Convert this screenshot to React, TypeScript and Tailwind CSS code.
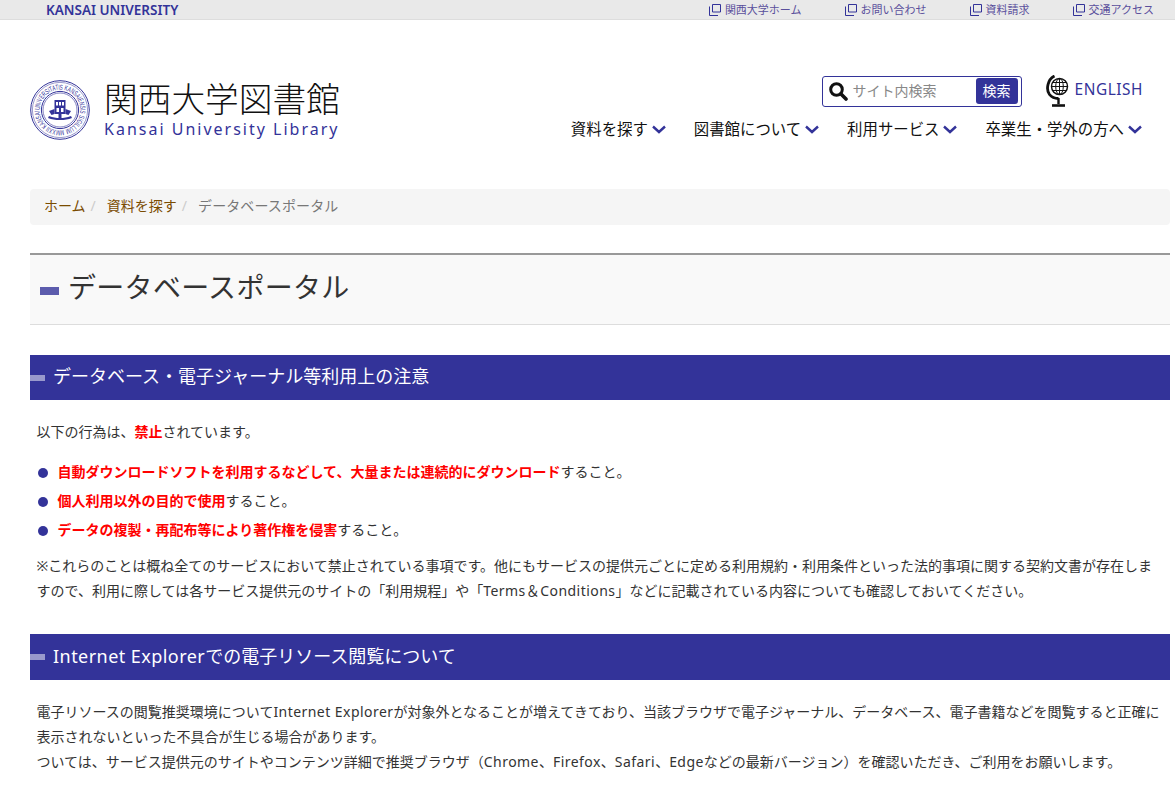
const jp = 'font-["Noto_Sans","Noto_Sans_CJK_JP",sans-serif]'

function TopLink({ label }: { label: string }) {
  return (
    <a className="flex items-center gap-[4px] text-[11px] leading-[12px] text-[#5a4f9c]">
      <svg width="12" height="12" viewBox="0 0 12 12" fill="none" stroke="#333399" strokeWidth="1">
        <path d="M3.500 .5h8v7.500h-8z" />
        <path d="M.5 2.500v9h8.500" />
      </svg>
      {label}
    </a>
  )
}

// 校章: 円形の文字は textPath の実テキスト
function Seal() {
  return (
    <svg width="60" height="60" viewBox="0 0 60 60" className="shrink-0">
      <defs>
        <path id="ring" d="M30 30m-20.300 0a20.300 20.300 0 1 1 40.600 0a20.300 20.300 0 1 1 -40.600 0" />
      </defs>
      <circle cx="30" cy="30" r="29.300" fill="none" stroke="#333399" strokeWidth="1" />
      <circle cx="30" cy="30" r="27.600" fill="none" stroke="#333399" strokeWidth=".5" />
      <circle cx="30" cy="30" r="18.600" fill="none" stroke="#333399" strokeWidth="1" />
      <circle cx="30" cy="30" r="17" fill="none" stroke="#333399" strokeWidth=".6" />
      <text fontSize="7.400" fill="#333399" fontFamily="Liberation Sans, sans-serif" textLength="126" lengthAdjust="spacingAndGlyphs">
        <textPath href="#ring">UNIVERSITATIS KANSAIENSIS SIGILLUM MMXXII KANSAI</textPath>
      </text>
      <path d="M24.500 20h11v14h-11z" fill="#333399" />
      <path d="M26 22h2v3.500h-2zM29 22h2v3.500h-2zM32 22h2v3.500h-2zM26.500 28h2.500v4h-2.500zM31 28h2.500v4h-2.500z" fill="#ffffff" />
      <path d="M19 31l5.500-2v5l-3 1zM41 31l-5.500-2v5l3 1z" fill="#333399" />
      <path d="M19 36c4 1.500 7 2 11 2s7-.5 11-2l1 2c-4 1.500-7 2-12 2s-8-.5-12-2z" fill="#333399" />
      <path d="M28.500 34h3v5h-3z" fill="#333399" />
    </svg>
  )
}

function Globe() {
  return (
    <svg width="24" height="32" viewBox="0 0 24 32" className="mr-[5px] ml-[24px] shrink-0" fill="none" stroke="#111">
      <circle cx="13.500" cy="11.500" r="8" strokeWidth="1.500" />
      <ellipse cx="13.500" cy="11.500" rx="3.800" ry="8" strokeWidth="1" />
      <path d="M5.500 11.500h16M6.500 7.500h14M6.500 15.500h14M13.500 3.500v16" strokeWidth="1" />
      <path d="M8.500 1C2 4-.5 14 3.500 19.500c2 2.500 5 4 9 4" strokeWidth="2.800" />
      <path d="M12.500 23v6" strokeWidth="2.400" />
      <path d="M6 30.500h13" strokeWidth="2.600" />
    </svg>
  )
}

function NavItem({ label }: { label: string }) {
  return (
    <a className="flex items-center gap-[4px] text-[15.400px] leading-[20px] text-[#111]">
      {label}
      <svg width="14" height="9" viewBox="0 0 14 9" fill="none" stroke="#333399" strokeWidth="2.400" className="mt-[-1px]">
        <path d="M1 1.500l6 5.500 6-5.500" />
      </svg>
    </a>
  )
}

function SectionHead({ children, className }: { children: React.ReactNode; className: string }) {
  return (
    <h2 className={`flex items-center bg-[#333399] text-[18px] font-normal text-white ${className}`}>
      <span className="mr-[8px] h-[6px] w-[15px] bg-[#9999cc]" />
      <span className="mt-[-2px]">{children}</span>
    </h2>
  )
}

function Bullet({ children }: { children: React.ReactNode }) {
  return (
    <li className="flex h-[29px] items-center">
      <span className="mt-[3px] mr-[10px] ml-[1px] h-[10px] w-[10px] rounded-full bg-[#333399]" />
      <span>{children}</span>
    </li>
  )
}

const Red = ({ children }: { children: React.ReactNode }) => (
  <strong className="font-bold text-[#ff0000]">{children}</strong>
)

// 欧文はメイリオに合わせて少し広げる
const Lat = ({ children }: { children: React.ReactNode }) => <span className="tracking-[0.45px]">{children}</span>

export default function App() {
  return (
    <div className={`${jp} h-[790px] w-[1175px] overflow-hidden bg-white text-[14px] text-[#333]`}>
      <div className="flex h-[20px] items-center justify-between border-b border-[#dddddd] bg-[#e9e9e9] pr-[21px] pl-[46px]">
        <span className="text-[13.500px] leading-[14px] font-semibold text-[#333399]">KANSAI UNIVERSITY</span>
        <div className="flex gap-[43px]">
          <TopLink label="関西大学ホーム" />
          <TopLink label="お問い合わせ" />
          <TopLink label="資料請求" />
          <TopLink label="交通アクセス" />
        </div>
      </div>

      <header className="flex justify-between pt-[55px] pr-[32px] pl-[30px]">
        <div className="mt-[5px] flex items-center gap-[14px]">
          <Seal />
          <div className="mt-[-2px]">
            <div className="text-[33.700px] leading-[38px] font-light text-[#111]">関西大学図書館</div>
            <div className="mt-[1px] text-[16px] leading-[20px] tracking-[2px] text-[#333399]">Kansai University Library</div>
          </div>
        </div>
        <div className="flex flex-col items-end">
          <div className="flex items-center">
            <div className="flex h-[31px] w-[200px] items-center rounded-[3px] border border-[#333399] pr-[3px] pl-[5px]">
              <svg width="20" height="20" viewBox="0 0 20 20" fill="none" stroke="#111" className="shrink-0">
                <circle cx="8.500" cy="8.500" r="5.800" strokeWidth="3" />
                <path d="M13 13l5 5" strokeWidth="3.600" strokeLinecap="round" />
              </svg>
              <span className="mb-[2px] ml-[5px] flex-1 text-[14px] text-[#888]">サイト内検索</span>
              <span className="flex h-[26px] w-[42px] items-center justify-center rounded-[3px] bg-[#333399] pb-[2px] text-[14px] text-white">検索</span>
            </div>
            <Globe />
            <span className="mb-[3px] text-[15.400px] tracking-[0.55px] text-[#333399]">ENGLISH</span>
          </div>
          <nav className="mt-[13px] mr-[1px] flex gap-[28px]">
            <NavItem label="資料を探す" />
            <NavItem label="図書館について" />
            <NavItem label="利用サービス" />
            <NavItem label="卒業生・学外の方へ" />
          </nav>
        </div>
      </header>

      <main className="mt-[49px] mr-[5px] ml-[30px]">
        <ol className="flex h-[36px] items-center rounded-[4px] bg-[#f5f5f5] px-[14px] pb-[3px] text-[14px]">
          <li className="text-[#7a4b00]">ホーム</li>
          <li className="mr-[11px] ml-[5px] text-[#cccccc]">/</li>
          <li className="text-[#7a4b00]">資料を探す</li>
          <li className="mr-[11px] ml-[5px] text-[#cccccc]">/</li>
          <li className="tracking-[0.1px] text-[#777777]">データベースポータル</li>
        </ol>

        <h1 className="mt-[28px] flex h-[72px] items-center border-t-2 border-b border-t-[#999999] border-b-[#dddddd] bg-[#f9f9f9] pb-[6px] pl-[10px] text-[28px] font-normal tracking-[0.3px] text-[#333]">
          <span className="mt-[8px] mr-[9px] h-[8px] w-[19px] bg-[#5c5cad]" />
          データベースポータル
        </h1>

        <section className="mt-[30px]">
          <SectionHead className="h-[45px]">データベース・電子ジャーナル等利用上の注意</SectionHead>
          <div className="px-[6.500px] leading-[25px]">
            <p className="mt-[19px]">
              以下の行為は、<Red>禁止</Red>されています。
            </p>
            <ul className="mt-[13px]">
              <Bullet>
                <Red>自動ダウンロードソフトを利用するなどして、大量または連続的にダウンロード</Red>すること。
              </Bullet>
              <Bullet>
                <Red>個人利用以外の目的で使用</Red>すること。
              </Bullet>
              <Bullet>
                <Red>データの複製・再配布等により著作権を侵害</Red>すること。
              </Bullet>
            </ul>
            <p className="mt-[9px]">
              ※これらのことは概ね全てのサービスにおいて禁止されている事項です。他にもサービスの提供元ごとに定める利用規約・利用条件といった法的事項に関する契約文書が存在しますので、利用に際しては各サービス提供元のサイトの「利用規程」や「<Lat>Terms＆Conditions</Lat>」などに記載されている内容についても確認しておいてください。
            </p>
          </div>
        </section>

        <section className="mt-[31px]">
          <SectionHead className="h-[46px]">
            <Lat>Internet Explorer</Lat>での電子リソース閲覧について
          </SectionHead>
          <div className="mt-[19px] px-[6.500px] leading-[25px]">
            <p>
              電子リソースの閲覧推奨環境について<Lat>Internet Explorer</Lat>が対象外となることが増えてきており、当該ブラウザで電子ジャーナル、データベース、電子書籍などを閲覧すると正確に表示されないといった不具合が生じる場合があります。
              <br />
              ついては、サービス提供元のサイトやコンテンツ詳細で推奨ブラウザ（<Lat>Chrome</Lat>、<Lat>Firefox</Lat>、<Lat>Safari</Lat>、<Lat>Edge</Lat>などの最新バージョン）を確認いただき、ご利用をお願いします。
            </p>
          </div>
        </section>
      </main>
    </div>
  )
}
